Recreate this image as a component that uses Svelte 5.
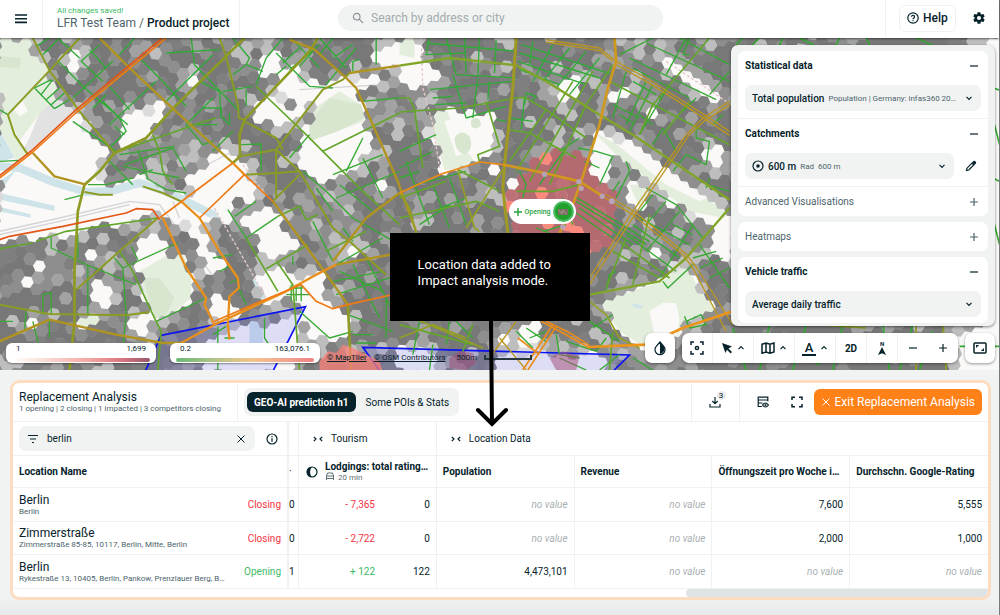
<script lang="ts">
  type Point = [number, number]

  let query = $state('berlin')
  let search = $state('')
  let tab = $state(0)

  const tabs = ['GEO-AI prediction h1', 'Some POIs & Stats']

  const rows = [
    { name: 'Berlin', address: 'Berlin', status: 'Closing', cut: '0', delta: '- 7,365', total: '0', values: ['', '', '7,600', '5,555'] },
    { name: 'Zimmerstraße', address: 'Zimmerstraße 85-85, 10117, Berlin, Mitte, Berlin', status: 'Closing', cut: '0', delta: '- 2,722', total: '0', values: ['', '', '2,000', '1,000'] },
    { name: 'Berlin', address: 'Rykestraße 13, 10405, Berlin, Pankow, Prenzlauer Berg, B…', status: 'Opening', cut: '1', delta: '+ 122', total: '122', values: ['4,473,101', '', '', ''] },
  ]

  const columns = ['Population', 'Revenue', 'Öffnungszeit pro Woche i…', 'Durchschn. Google-Rating']

  // the map has a west and an east sheet, the east one starts here
  const EAST = 1200

  const parse = (offset: number) => (v: string) =>
    v.split(' ').map((p) => {
      const [x, y] = p.split(',').map(Number)
      return [x + offset, y] as Point
    })

  // areas without residents, the hex layer leaves them out
  const voids = [
    ...[
      '0,0 95,0 110,50 140,100 160,160 200,200 235,225 255,275 300,320 335,350 300,375 290,400 300,430 340,440 400,420 460,430 530,470 560,480 580,440 540,420 600,385 660,345 700,340 740,385 760,420 780,470 760,500 720,480 690,500 680,550 640,540 615,560 605,590 640,640 680,690 640,720 650,760 700,800 720,840 660,870 640,820 620,780 640,750 625,690 600,640 570,570 520,540 460,530 400,535 350,560 250,580 150,600 70,600 0,610',
      '205,60 245,35 265,50 240,90 205,95',
      '370,240 430,215 480,240 460,280 400,310 360,320 350,280',
      '460,190 490,175 500,200 470,210',
      '560,140 600,105 605,130 560,170',
      '770,180 800,170 830,200 870,220 950,170 920,220 890,260 850,270 800,240 780,260 765,230',
      '780,60 830,50 850,100 790,120 760,110',
      '860,90 900,80 900,130 980,140 1130,110 1150,150 1070,165 1040,160 990,160 900,220 880,200 840,150',
      '920,260 960,180 1020,160 1085,200 1095,250 1110,330 1090,370 1040,390 980,430 940,420 900,380 890,320 930,300',
      '420,620 470,580 510,600 490,640 560,660 580,720 575,780 520,820 470,850 440,790 430,720 400,660',
      '290,720 340,740 350,790 300,810 280,770',
      '720,530 760,510 850,530 860,580 900,610 890,640 840,670 780,650 770,600 800,590 720,570',
      '750,690 800,700 850,700 880,720 940,700 1000,690 960,740 1000,800 1040,810 1040,900 990,910 930,900 900,820 860,790 800,800 780,760',
      '220,830 300,830 310,870 250,880',
      '380,850 450,840 470,890 400,880',
      '80,845 130,840 130,870 80,865',
      '1130,60 1150,20 1200,0 1250,0 1260,60 1280,90 1340,110 1330,140 1260,150 1200,140 1200,90 1140,90',
      '1000,590 1050,590 1050,620 980,570',
      '1130,420 1160,410 1170,440 1140,450',
      '690,870 890,840 900,900 880,1010 600,1010 600,930 660,880',
      '1020,640 1060,610 1070,650 1040,670',
      '50,715 85,715 85,740 50,740',
      '105,665 135,665 135,690 105,690',
      '255,640 290,640 290,665 255,665',
    ].map(parse(0)),
    ...[
      '85,220 150,205 180,240 240,220 285,240 300,320 260,345 190,390 130,395 120,350 100,310',
      '500,120 530,120 530,160 490,180 525,210 510,235 470,190 450,180',
      '580,280 650,300 740,350 850,440 960,490 990,520 1000,600 990,660 930,640 920,600 960,580 870,520 820,510 760,430 700,380 640,360 560,330',
      '565,385 600,340 640,380 620,430 580,400',
      '590,790 700,750 790,730 860,670 890,740 960,830 850,850 830,910 740,930 660,880 600,810',
      '690,440 750,430 760,470 720,510 690,490',
      '640,145 680,145 680,180 640,180',
      '750,200 790,200 780,230 750,230',
      '760,60 820,70 900,120 980,190 940,190 880,150 800,100',
      '910,320 960,330 960,400 920,370',
      '360,860 430,860 440,900 400,930 350,930',
      '280,890 330,900 310,940',
      '55,495 85,495 85,525 55,525',
      '290,950 600,950 640,1010 300,1010',
      '755,615 800,615 790,650 755,645',
      '240,380 290,390 285,420 240,400',
      '310,430 370,430 365,460 320,460',
      '0,930 120,940 120,1010 0,1010',
      '1750,0 1820,0 1820,1010 1750,1010',
      '1660,880 1820,880 1820,1010 1680,1010',
    ].map(parse(EAST)),
  ]

  const inside = (x: number, y: number, poly: Point[]) => {
    let hit = false
    for (let i = 0, j = poly.length - 1; i < poly.length; j = i++) {
      const [xi, yi] = poly[i]
      const [xj, yj] = poly[j]
      if (yi > y !== yj > y && x < ((xj - xi) * (y - yi)) / (yj - yi) + xi) hit = !hit
    }
    return hit
  }
  const isVoid = (x: number, y: number) => voids.some((v) => inside(x, y, v))

  let seed = 7
  const random = () => {
    seed = (seed * 16807) % 2147483647
    return seed / 2147483647
  }

  const tones = ['#747474', '#7b7b7b', '#8a8a8a', '#9f9f9f', '#bcbcbc', '#dadada', '#f0efef']
  const redTones = ['#b1656c', '#bb6c72', '#fa8679']

  const buildHexes = () => {
    const paths: Record<string, string> = {}
    const r = 20
    const turn = 0.12
    for (let row = -14; row < 48; row++) {
      for (let col = -6; col < 108; col++) {
        const gx = col * r * 1.5
        const gy = (row + (col % 2 ? 0.5 : 0)) * r * 1.732
        const x = gx * Math.cos(turn) - gy * Math.sin(turn)
        const y = gx * Math.sin(turn) + gy * Math.cos(turn) - 80
        const pick = random()
        if (x < -24 || x > 3024 || y < -24 || y > 1020 || isVoid(x, y)) continue
        const clump = Math.sin(x / 95 + y / 140) + Math.sin(y / 70 - x / 160)
        let edge = 0
        for (let a = 0; a < 6; a++) {
          if (isVoid(x + 30 * Math.cos(a), y + 30 * Math.sin(a))) edge++
        }
        let tone = pick < 0.66 ? 0 : pick < 0.78 ? 1 : pick < 0.89 ? 2 : pick < 0.96 ? 3 : 4
        if (edge > 0) tone = Math.min(6, Math.floor(pick * 4 + edge * 0.5))
        else if (clump > 1.2) tone = Math.min(5, 1 + Math.floor(pick * 4))
        let color = tones[tone]
        if (Math.hypot(x - 1690, y - 510) < 166) color = redTones[pick < 0.7 ? 0 : pick < 0.9 ? 1 : 2]
        let d = ''
        for (let a = 0; a < 6; a++) {
          const t = turn + (a * Math.PI) / 3
          d += `${a ? 'L' : 'M'}${(x + 20.6 * Math.cos(t)).toFixed(0)} ${(y + 20.6 * Math.sin(t)).toFixed(0)}`
        }
        paths[color] = (paths[color] ?? '') + d + 'Z'
      }
    }
    return Object.entries(paths)
  }
  const hexes = buildHexes()

  const west = [
    {
      color: '#2fab36', width: 4,
      d: 'M110 25 150 0M130 50 180 0M175 68 250 145 385 260M180 5 240 60M105 150 165 212M125 170 160 125M140 185 180 150M155 200 195 165M165 212 210 185M105 150 155 125M270 35 320 90M300 20 245 70 310 130M330 145 390 215M220 180 340 70M240 215 440 50M330 260 470 130M280 210 320 170M310 190 360 240 380 280 330 330M345 265 375 290M220 250 350 340M405 0 360 50M425 65 470 110 560 205M500 45 660 35M575 0 585 80M640 50 500 190M585 80 720 220M600 130 660 160 665 240M560 260 640 180M610 210H665V235L690 260V225M575 260H655M670 160 760 145M740 155V205M700 0 750 60 740 80 700 110M770 140 800 60 850 0M740 80 790 100M830 45 930 145 1000 150M850 75 900 30M830 110 860 85M870 95 960 20M880 5 960 90M900 85 940 40M1000 0 960 50M960 0 1040 90M1070 30 980 140M1060 100V70L1080 65M1130 0V80M1000 60 1060 20',
    },
    {
      color: '#35a932', width: 4,
      d: 'M360 350 525 325M375 380 520 330M415 335 430 380 445 420M330 370 400 440M420 410 460 395M520 330 560 400M560 260 610 320 640 310M370 385 540 420M700 280 640 340M440 420 500 455 560 465M265 440 320 440 400 420M725 320 785 318V400M910 400 980 460 1060 540 1200 620M930 290 870 360M1000 410 1150 350M1010 480 1200 400M1020 440 1120 520M1090 360 1150 480M950 450 1000 520M1040 400 1090 300M1085 190 1200 180M940 550 1000 670M1060 610 1030 570M1010 680 1150 600M1020 700 1150 760M1060 680 1140 840M1100 660 1180 820M1000 730 1150 700M1010 770 1200 710M195 485 245 472M0 850H40M100 850 120 930M0 370 60 367M0 215 25 230M655 865V996M795 840V900L830 950M675 900H705M640 890 680 865M900 820 990 900 1060 880M1060 890H1120M1070 915H1130M1045 830 1180 880M1160 770V900',
    },
    {
      color: '#38a833', width: 4,
      d: 'M155 598V630L260 680 410 740M235 590V660M265 680V830M345 660 370 690 380 830 370 930M370 690 535 615M395 625 415 665M470 850 620 780M130 830V770L155 765V830M80 820 75 880M150 845V900M685 515 740 600M740 600 835 535M705 535 770 490M640 660 700 650M660 700 690 685M690 735 715 725M715 745 740 800M875 740V790M890 740V790M905 740V790M860 770H930M870 750H910M880 655V680',
    },
    {
      color: '#63a62b', width: 5,
      d: 'M0 632 100 615M110 610 200 580 475 540M345 345 600 255 650 240M460 290 480 340 490 400 520 440M770 145 805 180 920 290 970 340 1090 460 1200 560M970 340 1200 225M740 600 835 760M835 535 900 505 920 545 955 530M800 692 925 620M835 675 880 740 900 996M360 640 400 700 460 830 485 880 475 996M980 640 1100 580',
    },
    {
      color: '#8b9c24', width: 6,
      d: 'M100 0 150 98 240 220 345 345M240 0 150 98 25 230 45 290 85 350M660 0 680 55 715 200 718 240 735 245M0 800 150 828 380 832 450 822M475 540 360 640 230 755M255 462 300 470H340M430 445 490 465 545 490M830 335 900 400 1000 570 1050 610 1160 710M1050 105 1030 125 970 155 830 335 722 355M735 250 830 300 850 335M830 335V400L830 480M740 410 830 405 900 400M820 490 900 410',
    },
    {
      color: '#8f9a22', width: 8,
      d: 'M735 0 520 212 440 300 345 345 300 400 255 440 235 520 225 700V850L210 996M955 0 930 40 735 245 720 290 722 355 700 375M1045 800 1055 996',
    },
    {
      color: '#b0941f', width: 7,
      d: 'M300 0 385 85 520 212 700 375M870 5 945 35 1040 120 1070 150 1115 250 1195 430 1220 500 1250 580M1050 105 1200 83M0 910 150 845 350 890 490 915H545M100 345 165 415 260 440M820 490 960 680 1045 800M1010 680 1200 645M1000 670 1100 540 1200 465',
    },
    {
      color: '#e8901c', width: 7,
      d: 'M490 540 560 690 620 780 615 800 645 860M600 540 660 640 715 720 718 750 690 775 685 860 690 905M545 490 600 540M545 915 645 860 860 760 950 710 1010 680M700 375 735 410',
    },
    {
      color: '#ef7a16', width: 5,
      d: 'M480 540 700 375M600 540 735 410 820 490M905 740 950 790 1000 812 1045 800 1200 765M645 850 760 800 905 740M0 420 100 342 232 222 500 0',
    },
    { color: '#e25718', width: 5, d: 'M0 413 100 335 230 215 488 0M0 605 30 595 190 565 380 525 410 512 460 515 480 545' },
  ]

  const east = [
    {
      color: '#2fab36', width: 4,
      d: 'M90 0 80 50 200 45M140 0 170 110 350 120M195 0 200 105M240 0 235 110M290 5 285 105M80 15 350 40M90 155 340 130M100 180 160 175M105 200 200 195M160 110 200 240M235 120 220 240M270 130 265 185M200 240 320 205M365 20 640 110M360 45 600 120M355 70 560 140M360 95 480 140M400 10 390 80M460 20 400 130M510 30 430 130M560 40 470 150M600 60 510 170M375 200 380 165 410 175 395 190M330 240 400 250M375 180 365 275M480 340 540 300M420 440 500 330M290 245 320 250M535 330 590 340 640 355 600 440M555 370 600 390',
    },
    {
      color: '#35a932', width: 4,
      d: 'M660 50 760 0M740 15 990 130M690 60 950 185M700 90 870 180M680 100 640 240M740 130 680 260M760 140 690 280M810 140 720 290M700 130 770 170M640 200 720 240M660 230 700 255M890 180 850 220M860 0 800 110M720 230 760 260M790 270 830 340M790 270 760 320M890 270V300L930 310 920 380 860 350 820 400M970 230 940 260M870 0 850 50 870 50M840 0 990 80M920 440 990 460M930 420 920 450M990 100 930 170M650 480 690 400 680 370M660 430 640 460M740 450 830 500 910 600M760 470 720 520M800 490 740 560M840 520 740 640M880 560 780 720M720 540 870 620M700 560 840 660M680 590 830 700M820 560 880 590M620 755 630 710 650 700M790 730 805 750 880 680M900 620 990 750M880 660 950 640M900 690 970 660M930 720 990 690',
    },
    {
      color: '#35a932', width: 4,
      d: 'M360 400 380 440 370 480M525 475 750 610M530 490 740 620M540 510 700 620M530 525 640 600M490 480 520 560M430 580 500 560M410 570 450 585M0 340 110 290M0 390 100 340M20 370 60 480M30 400 90 560M50 440 200 400M100 440 150 570M150 420 200 560M60 560 150 500M120 510 200 480M0 420 60 400M580 870 640 830M570 850 660 910M500 910 590 940 620 900M470 890 480 950 540 960M855 835 870 870 920 860 905 830 860 850M380 870 440 910M390 900 440 880M350 880 400 930M60 850 40 950M150 850 140 920M170 850 220 900M100 920 90 996M480 960 560 996M700 960 760 996M660 950 600 996',
    },
    {
      color: '#35a932', width: 5,
      d: 'M1010 20 1030 0M1080 0 1050 30M1150 0 1130 40M1200 0 1260 30M1320 0 1300 40M1400 0 1420 40M1550 0 1640 40M1000 870 1040 996M1110 860 1080 996M1150 900 1000 960M1220 860 1180 996M1330 860 1300 996M1400 900 1250 980M1450 860 1470 996M1540 860 1500 996M1600 880 1560 996M1780 150 1800 156M1785 260 1800 320M1780 420 1800 430M1785 560 1800 620M1680 925 1800 925M1780 700V800',
    },
    {
      color: '#63a62b', width: 5,
      d: 'M0 222 180 210 350 180 375 178 440 215 560 300M0 180 30 180 45 215 70 390M325 275 390 285 530 360M440 215 330 370M520 130 350 400M580 100 390 430M640 80 560 200 450 440M240 372 235 350 300 325 260 190M350 460 460 460 540 440M0 540 230 490 300 520M0 480 140 430M175 395 300 460M630 130 990 320M930 0 760 200 720 290M870 190 790 290M0 860 220 920M220 860 190 940M640 880 630 996M660 610 810 720M640 640 780 720M750 530 700 740M680 600 620 750',
    },
    {
      color: '#80a528', width: 7,
      d: 'M0 83 150 60 350 82 440 130 600 230 700 290 990 485M570 770 780 730 860 660 990 510',
    },
    {
      color: '#93a022', width: 5,
      d: 'M0 465 30 510 50 585M310 395 200 570M175 395 190 450 225 570 240 580M570 790 620 830 660 900 720 930M0 900 100 860 200 900M20 830 250 930M1550 850V996M1630 850 1640 996M1250 860 1400 870',
    },
    { color: '#a09a22', width: 9, d: 'M350 0 340 150 315 380 310 450 325 585' },
    {
      color: '#bb9620', width: 4,
      d: 'M440 5 600 30 650 70M440 12 600 38 640 70M650 70 740 120 860 195 990 280M645 78 740 130 860 205 990 292M990 190 910 240 860 290 700 520 570 720M992 200 917 247 868 292 708 527 570 740M610 475 700 530 850 650 880 690 980 880M618 468 706 522 860 648 892 690 1000 860M270 960 350 850M300 900 380 996',
    },
    { color: '#d0991d', width: 8, d: 'M645 0 650 70 625 150 600 260 545 430 520 500 480 585M310 380 435 405 540 430 610 475' },
    { color: '#ec8c18', width: 5, d: 'M0 465 120 410 240 372 310 380M425 850 500 890 570 930M440 850 510 884 570 922M460 860 370 996M470 866 385 996M355 900 420 950' },
    { color: '#ec951c', width: 8, d: 'M565 927 740 920 850 870 1000 820' },
  ]
</script>

{#snippet chevron(up = false)}
  <svg class="chevron" class:up viewBox="0 0 8 8" aria-hidden="true"><path d="M1.5 2.8 4 5.3 6.5 2.8" /></svg>
{/snippet}

{#snippet sign(plus = false)}
  <svg class="sign" viewBox="0 0 12 12" aria-hidden="true"><path d={plus ? 'M2 6h8M6 2v8' : 'M2 6h8'} /></svg>
{/snippet}

{#snippet streets(sheet: typeof west)}
  {#each sheet as road}
    <path d={road.d} fill="none" stroke={road.color} stroke-width={road.width} stroke-linejoin="round" />
  {/each}
{/snippet}

<div class="app">
  <header>
    <button class="burger" aria-label="Menu">
      <svg width="14" height="12" viewBox="0 0 14 12"><path d="M1 2h12M1 5.7h12M1 9.4h12" /></svg>
    </button>
    <div class="project">
      <span class="saved">All changes saved!</span>
      <h1><a href="#team">LFR Test Team</a> / <b>Product project</b></h1>
    </div>
    <label class="search">
      <svg width="12" height="12" viewBox="0 0 12 12"><circle cx="4.7" cy="4.7" r="3.3" /><path d="m7.2 7.2 3.8 3.8" /></svg>
      <input type="text" aria-label="Search" placeholder="Search by address or city" bind:value={search} />
    </label>
    <div class="actions">
      <button class="help">
        <svg width="12" height="12" viewBox="0 0 12 12"><circle cx="6" cy="6" r="5.2" /><path d="M4.5 4.8a1.5 1.5 0 1 1 2.2 1.3c-.5.3-.7.5-.7 1.1M6 8.3v1" /></svg>
        Help
      </button>
      <button class="gear" aria-label="Settings">
        <svg width="14" height="14" viewBox="0 0 24 24"><path d="M19.400 13c0-.3.1-.6.1-1s0-.7-.1-1l2.100-1.600c.2-.2.2-.4.1-.6l-2-3.500c-.1-.2-.4-.3-.6-.2l-2.500 1c-.5-.4-1.100-.7-1.700-1l-.4-2.600c0-.3-.2-.5-.5-.5h-4c-.3 0-.5.2-.5.4L9 5.100c-.6.2-1.100.6-1.600 1l-2.500-1c-.2-.1-.5 0-.6.2l-2 3.500c-.1.2-.1.4.1.6L4.600 11c0 .3-.1.6-.1 1s0 .7.1 1l-2.200 1.600c-.2.2-.2.4-.1.6l2 3.500c.1.2.4.3.6.2l2.500-1c.5.4 1 .7 1.600 1l.4 2.600c.1.3.3.5.6.5h4c.3 0 .5-.2.5-.4l.4-2.700c.6-.2 1.100-.6 1.600-1l2.500 1c.2.1.5 0 .6-.2l2-3.500c.1-.2.1-.4-.1-.6zM12 15.500a3.500 3.500 0 1 1 0-7 3.500 3.500 0 0 1 0 7z" /></svg>
      </button>
    </div>
  </header>

  <section class="map" aria-label="Map">
    <svg class="canvas" viewBox="0 0 3000 996" preserveAspectRatio="xMidYMid slice" aria-hidden="true">
      <rect width="3000" height="996" fill="#fbf9f8" />
      <path fill="#e2e2e3" d="M45 380 100 335 235 215 170 160 130 200 90 300zM330 70 420 0h80L385 90z" />
      <path fill="#e4eedd" d="M0 0H100L150 98 25 230 45 290 85 350 50 370 0 270zM25 230 150 98l30 70-60 60-60 80zM930 220l90-60 65 40 10 50-165 60zM420 700l120-70 35 70v80l-85 70-50-60zM220 830h85v40h-60zM980 570h70v50z" />
      <path fill="#d9e6cf" d="M0 55 65 60 60 92 0 86zM930 250l60-70 95 20 10 40-80 40-85 30zM430 720l50 0 45 60-30 60-30 0z" />
      <path fill="#fbf9f8" d="m40 210 30-20 15 30-25 15z" />
      <path fill="none" stroke="#cfe4e9" stroke-width="24" d="M0 385 60 390 160 432 260 462 340 458 420 435 500 460 560 490 640 530" />
      <path fill="none" stroke="#cfe4e9" stroke-width="14" d="M640 520 700 620 790 780 770 900" />
      <path fill="#cfe4e9" d="M0 465l165 38v16L0 485zM0 507l93 22v10L0 520zM0 275l45 85-45 10zM0 430 50 395 10 450zM750 850h40v90h-40z" />
      <path fill="none" stroke="#d4d4d6" stroke-width="4" d="M0 580 180 540 390 490 480 500 660 740M0 590 180 550 390 500M520 490 540 540M900 155 1150 140M490 450 690 345" />
      <g transform="translate({EAST} 0)">
        <path fill="#e4eedd" d="M0 0h45v60L0 50zM85 220l50-15 50 110 50 70-100 12zM580 280l240 130 170 120-20 10-100-20-200-150zM600 790l190-60 70-60 30 70 70 90-110 20-20 60-90 20-80-50zM690 440h60l10 30-40 40zM1440 0h260v30h-260z" />
        <path fill="#fbf9f8" d="m135 250 50-15 45 100-60 20zM750 820l40-25h40l10 50-10 50-60 20zM640 310l100 40 120 90 60 40-20 10-100-50z" />
        <path fill="#d9e6cf" d="M165 300q20-30 45-5 15 40-15 55-30-10-30-50M215 245q25-15 30 15-15 20-30 5z" />
        <path fill="#cfe4e9" d="m700 795 30 8-6 10-26-8zM1300 0h110v16h-110z" />
      </g>
      {#each hexes as [color, d]}
        <path {d} fill={color} opacity="0.97" />
      {/each}
      <path class="rail" d="M645 510 800 780M1265 0 1270 150 1300 260 1320 390M2000 70 2180 190M730 380 790 460" />
      <path class="zone" d="M485 892 918 806 800 1040H420zM1090 928 1890 951 1800 1040H1170z" />
      {@render streets(west)}
      <g transform="translate({EAST} 0)">{@render streets(east)}</g>
      <g fill="#b9a3b8">
        <circle cx="1635" cy="409" r="8" /><circle cx="1738" cy="431" r="8" /><circle cx="1745" cy="451" r="8" />
        <circle cx="1808" cy="475" r="8" /><circle cx="1837" cy="490" r="9" /><circle cx="1690" cy="567" r="8" />
      </g>
      <path fill="#fb8079" opacity=".75" d="M960 970 985 940 1010 945 1030 920 1060 930 1080 940 1140 970 1150 1000H960z" />
      <path fill="#a0486f" opacity=".5" d="M1350 960 1380 940 1420 945 1430 975 1400 996 1350 990zM1650 960l40-20 50 15-10 41h-60z" />
    </svg>

    <div class="marker">
      <svg width="8" height="8" viewBox="0 0 8 8"><path d="M0 4h8M4 0v8" /></svg>
      Opening
      <i><svg width="10" height="6" viewBox="0 0 10 6"><path fill="#7d6f63" d="M0 0h10v6H0z" /><path stroke="#a3988b" fill="none" d="m1 1 3 4 1-4 3 4" /></svg></i>
    </div>

    <aside class="layers">
      <div class="box">
        <section>
          <button class="fold open">Statistical data {@render sign()}</button>
          <div class="field">
            <label for="stat">Total population</label>
            <select id="stat"><option>Population | Germany: infas360 20…</option></select>
            {@render chevron()}
          </div>
        </section>
        <section>
          <button class="fold open">Catchments {@render sign()}</button>
          <div class="pair">
            <div class="field">
              <svg width="12" height="12" viewBox="0 0 12 12"><circle class="line" cx="6" cy="6" r="5" /><circle cx="6" cy="6" r="1.8" fill="#06232b" /></svg>
              <label for="catch">600 m</label>
              <select id="catch"><option>Rad&nbsp; 600 m</option></select>
              {@render chevron()}
            </div>
            <button class="edit" aria-label="Edit catchment">
              <svg width="12" height="12" viewBox="0 0 12 12"><path class="line" d="M1.500 10.500 2 8.200l5-5 1.800 1.800-5 5z" /><path fill="#06232b" d="m7 2.500 1.500-1.500q.8-.6 1.600.1l.8.8q.6.8 0 1.600L9.500 5z" /></svg>
            </button>
          </div>
        </section>
        <section>
          <button class="fold">Advanced Visualisations {@render sign(true)}</button>
        </section>
      </div>
      <div class="box"><button class="fold">Heatmaps {@render sign(true)}</button></div>
      <div class="box last">
        <button class="fold open">Vehicle traffic {@render sign()}</button>
        <div class="field">
          <select class="main" aria-label="Vehicle traffic"><option>Average daily traffic</option></select>
          {@render chevron()}
        </div>
      </div>
    </aside>

    <div class="legends">
      <div class="legend"><span>1</span><span>1,699</span><i class="population"></i></div>
      <div class="legend"><span>0.2</span><span>163,076.1</span><i class="traffic"></i></div>
      <p class="credits">
        <a href="#maptiler">© MapTiler</a>
        <a href="#osm">© OSM Contributors</a>
        <span>500m</span>
        <i></i>
      </p>
    </div>

    <div class="tools">
      <button class="tool" aria-label="Contrast">
        <svg width="14" height="16" viewBox="0 0 14 16"><path class="line" d="M7 2 3.400 6.200a5 5 0 1 0 7.200 0z" /><path fill="#06232b" d="M7 2v12a5 5 0 0 0 3.600-7.800z" /></svg>
      </button>
      <div class="bar">
        <button aria-label="Focus">
          <svg width="14" height="14" viewBox="0 0 14 14"><path class="line bold" d="M1 4V1h3M10 1h3v3M13 10v3h-3M4 13H1v-3" /><circle class="line bold" cx="7" cy="7" r="1.600" /></svg>
        </button>
        <button class="wide" aria-label="Select">
          <svg width="12" height="12" viewBox="0 0 12 12"><path fill="#06232b" d="m1 1 10 3.600-3.600 1.800 3.600 3.600-1.400 1.400L6 7.800 4.400 11z" /></svg>
          {@render chevron(true)}
        </button>
        <button class="wide" aria-label="Map style">
          <svg width="14" height="12" viewBox="0 0 14 12"><path class="line bold" d="M1 2.200 5 1l4 1.200L13 1v9l-4 1.200L5 10l-4 1.200zM5 1v9M9 2v9" /></svg>
          {@render chevron(true)}
        </button>
        <button class="wide" aria-label="Labels"><span class="letter">A</span>{@render chevron(true)}</button>
        <button class="text">2D</button>
        <button class="north" aria-label="North"><span>N</span><svg width="8" height="8" viewBox="0 0 8 8"><path fill="#06232b" d="m4 0 4 8-4-1.800L0 8z" /></svg></button>
        <button class="zoom" aria-label="Zoom out">{@render sign()}</button>
        <button class="zoom" aria-label="Zoom in">{@render sign(true)}</button>
      </div>
      <button class="tool" aria-label="Fit screen">
        <svg width="14" height="12" viewBox="0 0 14 12"><rect class="line bold" x="1" y="1" width="12" height="10" rx="1" /><path class="line" d="M3.600 5.400V3.600h2M10.400 6.600v1.800h-2" /></svg>
      </button>
    </div>

    <div class="callout">
      <p>Location data added to<br />Impact analysis mode.</p>
      <svg width="34" height="106" viewBox="0 0 34 106"><path d="M16 0 17 102M3 89l14 14 14-14" /></svg>
    </div>
  </section>

  <main>
    <div class="card">
      <div class="top">
        <div class="title">
          <h2>Replacement Analysis</h2>
          <p>1 opening | 2 closing | 1 impacted | 3 competitors closing</p>
        </div>
        <div class="tabs">
          {#each tabs as label, i}
            <button class:active={tab === i} onclick={() => (tab = i)}>{label}</button>
          {/each}
        </div>
        <button class="download" aria-label="Downloads">
          <svg width="12" height="12" viewBox="0 0 12 12"><path class="line" d="M6 1v6.500M3.300 5 6 7.700 8.700 5M1 8v3h10V8" /></svg>
          <span class="badge">3</span>
        </button>
        <div class="right">
          <button class="icon" aria-label="Columns">
            <svg width="12" height="12" viewBox="0 0 12 12"><path class="line" d="M5 10.500H1.200V1.200h9.600v4M1 4h10M1.500 7h4" /><path class="line" d="M5.500 9q3-4 6 0-3 4-6 0z" /><circle cx="8.500" cy="9" r="1" fill="#06232b" /></svg>
          </button>
          <button class="icon" aria-label="Fullscreen">
            <svg width="12" height="12" viewBox="0 0 12 12"><path class="line bold" d="M1 4V1.200h3M8 1.200h3V4M11 8v2.800H8M4 10.800H1V8" /></svg>
          </button>
          <button class="exit">
            <svg width="8" height="8" viewBox="0 0 8 8"><path d="m.5.5 7 7M7.500.5l-7 7" /></svg>
            Exit Replacement Analysis
          </button>
        </div>
      </div>

      <table>
        <colgroup><col class="place" /><col class="sliver" /><col /><col /><col /><col /><col /></colgroup>
        <thead>
          <tr class="groups">
            <td class="pinned">
              <div class="finder">
                <div class="filter">
                  <svg width="12" height="10" viewBox="0 0 12 10"><path class="line" d="M1 1.500h10M3 5h6M5 8.500h2" /></svg>
                  <input type="text" aria-label="Filter locations" bind:value={query} />
                  <button aria-label="Clear" onclick={() => (query = '')}><svg width="8" height="8" viewBox="0 0 8 8"><path stroke="#06232b" d="m.5.500 7 7M7.500.5l-7 7" /></svg></button>
                </div>
                <button aria-label="Info"><svg width="12" height="12" viewBox="0 0 12 12"><circle class="line" cx="6" cy="6" r="5" /><path class="line" d="M6 5.200v3.600M6 3v1.200" /></svg></button>
              </div>
            </td>
            <td></td>
            <th class="group">
              <svg width="10" height="6" viewBox="0 0 10 6"><path class="line" d="m.8.800 2.200 2.200L.8 5.200M9.200.8 7 3l2.200 2.200" /></svg>Tourism
            </th>
            <th class="group" colspan="4">
              <svg width="10" height="6" viewBox="0 0 10 6"><path class="line" d="m.8.800 2.200 2.200L.8 5.200M9.200.8 7 3l2.200 2.200" /></svg>Location Data
            </th>
          </tr>
          <tr class="heads">
            <th class="pinned">Location Name</th>
            <td class="cut">·</td>
            <th>
              <div class="metric">
                <svg width="12" height="12" viewBox="0 0 12 12"><circle class="line" cx="6" cy="6" r="5" /><path fill="#06232b" d="M6 1a5 5 0 0 0 0 10q-2-2-2-5t2-5" /></svg>
                <div>
                  Lodgings: total rating…
                  <small><svg width="10" height="8" viewBox="0 0 10 8"><path fill="none" stroke="#5d7076" d="M1.500 8V4l1-3h5l1 3v4M1.500 4h7M1.500 6.500h7" /></svg>20 min</small>
                </div>
              </div>
            </th>
            {#each columns as column}
              <th>{column}</th>
            {/each}
          </tr>
        </thead>
        <tbody>
          {#each rows as row}
            <tr>
              <td class="pinned">
                <div class="location">
                  <div>
                    <strong>{row.name}</strong>
                    <small>{row.address}</small>
                  </div>
                  <span class={row.status === 'Closing' ? 'loss' : 'gain'}>{row.status}</span>
                </div>
              </td>
              <td class="cut">{row.cut}</td>
              <td>
                <div class="change">
                  <span class={row.status === 'Closing' ? 'loss' : 'gain'}>{row.delta}</span>
                  <span>{row.total}</span>
                </div>
              </td>
              {#each row.values as value}
                <td class="value">
                  {#if value}{value}{:else}<em>no value</em>{/if}
                </td>
              {/each}
            </tr>
          {/each}
        </tbody>
      </table>
      <div class="track"><i></i></div>
    </div>
  </main>
</div>

<style>
  :global(body) {
    background: #f1f3f3;
    font-family: Roboto, 'Liberation Sans', sans-serif;
    font-size: 10px;
    color: #06232b;
  }

  .app {
    display: flex;
    flex-direction: column;
    min-height: 100vh;
    box-sizing: border-box;
    border-right: 1px solid #777b7d;
    --line: #f0f2f2;
    --soft: #f1f3f3;
    --ink: #06232b;
    --muted: #4d646c;
  }

  button,
  input,
  select {
    font: inherit;
    color: inherit;
    border: 0;
    padding: 0;
    margin: 0;
    background: none;
    min-width: 0;
  }

  button {
    cursor: pointer;
  }

  svg {
    flex: none;
  }

  h1,
  h2,
  p {
    margin: 0;
    font-weight: 400;
  }

  .line {
    fill: none;
    stroke: var(--ink);
    stroke-width: 1.2;
  }

  .line.bold {
    stroke-width: 1.5;
  }

  header {
    display: grid;
    grid-template-columns: 43px 197px minmax(0, 1fr) 114px;
    height: 38px;
    position: relative;
    z-index: 2;
    background: #fff;
    box-shadow: 0 1px 2px rgba(0, 0, 0, 0.5);
  }

  .burger {
    display: flex;
    align-items: center;
    justify-content: center;
    border-right: 1px solid var(--line);
  }

  .burger svg {
    stroke: var(--ink);
    stroke-width: 1.6;
  }

  .project {
    padding: 6px 0 0 14px;
    border-right: 1px solid var(--line);
    white-space: nowrap;
  }

  .saved {
    display: block;
    font-size: 8px;
    line-height: 10px;
    color: #3dba62;
  }

  h1 {
    font-size: 12px;
    line-height: 14px;
    color: var(--muted);
  }

  h1 a {
    color: inherit;
    text-decoration: none;
  }

  h1 b {
    font-weight: 500;
    color: var(--ink);
  }

  .search {
    display: flex;
    align-items: center;
    gap: 7px;
    width: 293px;
    height: 26px;
    margin: 5px 0 0 98px;
    padding: 0 18px 0 14px;
    border-radius: 13px;
    background: var(--soft);
  }

  .search svg {
    fill: none;
    stroke: #8d9799;
    stroke-width: 1.2;
  }

  .search input {
    flex: 1;
    font-size: 12px;
    outline: 0;
  }

  .search input::placeholder {
    color: #a3abad;
  }

  .actions {
    display: flex;
    align-items: center;
    gap: 16px;
    padding: 0 0 2px 13px;
    border-left: 1px solid var(--line);
  }

  .help {
    display: flex;
    align-items: center;
    gap: 4px;
    height: 27px;
    padding: 0 7px;
    border: 1px solid var(--line);
    border-radius: 6px;
    font-size: 12px;
    font-weight: 500;
  }

  .help svg {
    fill: none;
    stroke: var(--ink);
    stroke-width: 1.2;
  }

  .gear svg {
    display: block;
    fill: var(--ink);
  }

  .map {
    flex: 1 0 332px;
    position: relative;
  }

  .canvas {
    position: absolute;
    width: 100%;
    height: 100%;
  }

  .rail {
    fill: none;
    stroke: #e3c9c9;
    stroke-width: 4;
    stroke-dasharray: 9 6;
  }

  .zone {
    fill: rgba(110, 110, 240, 0.2);
    stroke: #0a14f0;
    stroke-width: 5;
  }

  .marker {
    position: absolute;
    left: 51%;
    top: 161px;
    display: flex;
    align-items: center;
    gap: 2px;
    height: 25px;
    padding: 0 2px 0 5px;
    border-radius: 13px;
    background: #fff;
    color: #27a13c;
    font-size: 7px;
    font-weight: 500;
  }

  .marker > svg {
    stroke: #27a13c;
    stroke-width: 1.4;
  }

  .marker i {
    display: grid;
    place-items: center;
    width: 17px;
    height: 17px;
    border: 2px solid #4dbb62;
    border-radius: 50%;
    background: #20a12c;
  }

  .layers {
    position: absolute;
    top: 7px;
    right: 4px;
    width: 264px;
    box-sizing: border-box;
    padding: 6px 7px 3px;
    border-radius: 7px;
    background: var(--soft);
    box-shadow: 0 1px 3px rgba(0, 0, 0, 0.5);
  }

  .box {
    margin-bottom: 6px;
    border-radius: 7px;
    background: #fff;
  }

  .box.last {
    margin: 0;
    padding-bottom: 6px;
  }

  .box section + section {
    border-top: 1px solid var(--line);
  }

  .box section:not(:last-child) {
    padding-bottom: 7px;
  }

  .fold {
    display: flex;
    align-items: center;
    justify-content: space-between;
    width: 100%;
    height: 29px;
    padding: 0 8px 0 7px;
    color: var(--muted);
  }

  .fold.open {
    height: 34px;
    padding-bottom: 5px;
    font-weight: 700;
    color: var(--ink);
  }

  .sign {
    width: 12px;
    height: 12px;
    stroke: currentColor;
    stroke-width: 1.2;
  }

  .chevron {
    width: 8px;
    height: 8px;
    fill: none;
    stroke: var(--ink);
    stroke-width: 1.2;
    pointer-events: none;
  }

  .chevron.up {
    transform: rotate(180deg);
  }

  .field {
    display: flex;
    align-items: center;
    gap: 4px;
    flex: 1;
    height: 26px;
    margin: 0 7px;
    padding: 0 8px 0 7px;
    border-radius: 7px;
    background: var(--soft);
  }

  .field label,
  .field .main {
    font-size: 10px;
    font-weight: 500;
  }

  .field select {
    flex: 1;
    appearance: none;
    font-size: 8px;
    color: var(--muted);
  }

  .field .main {
    font-size: 10px;
    color: var(--ink);
  }

  .pair {
    display: flex;
    align-items: center;
  }

  .pair .field {
    margin-right: 4px;
  }

  .edit {
    display: grid;
    place-items: center;
    width: 26px;
    margin-right: 4px;
  }

  .legends {
    position: absolute;
    left: 6px;
    bottom: 7px;
    display: flex;
    gap: 14px;
  }

  .legend {
    display: flex;
    flex-wrap: wrap;
    justify-content: space-between;
    width: 150px;
    height: 20px;
    box-sizing: border-box;
    padding: 0 6px;
    border-radius: 6px;
    background: #fff;
    box-shadow: 0 1px 2px rgba(0, 0, 0, 0.4);
    font-size: 8px;
    line-height: 12px;
  }

  .legend span {
    padding: 0 4px;
  }

  .legend i {
    width: 100%;
    height: 4px;
    margin-top: 2px;
    border-radius: 2px;
  }

  .population {
    background: linear-gradient(90deg, #fff, #fbe3da 20%, #f4a8a4 55%, #d8747e 80%, #95596b);
  }

  .traffic {
    background: linear-gradient(90deg, #6bb977, #b6c38a 30%, #f3c48b 55%, #f2a491 80%, #ee8485);
  }

  .credits {
    display: flex;
    align-items: center;
    gap: 7px;
    margin-left: -7px;
    padding-top: 9px;
    font-size: 8px;
  }

  .credits a {
    color: inherit;
  }

  .credits span {
    margin-left: 4px;
  }

  .credits i {
    width: 44px;
    height: 3px;
    border: 2px solid #26383d;
    border-top: 0;
  }

  .tools {
    position: absolute;
    right: 4px;
    bottom: 7px;
    display: flex;
    gap: 7px;
  }

  .tool,
  .bar {
    display: flex;
    height: 30px;
    border-radius: 7px;
    background: #fff;
    box-shadow: 0 1px 3px rgba(0, 0, 0, 0.4);
  }

  .tool {
    width: 30px;
    align-items: center;
    justify-content: center;
  }

  .bar button {
    display: flex;
    align-items: center;
    justify-content: center;
    gap: 4px;
    width: 31px;
    box-sizing: border-box;
    border-right: 1px solid var(--line);
  }

  .bar .wide {
    width: 41px;
  }

  .bar .text {
    font-weight: 700;
  }

  .bar .zoom {
    width: 30px;
    border: 0;
  }

  .bar .north {
    flex-direction: column;
    gap: 0;
    font-size: 6px;
    line-height: 6px;
    font-weight: 700;
  }

  .letter {
    width: 14px;
    border-bottom: 2px solid var(--ink);
    font-size: 13px;
    line-height: 13px;
    font-weight: 500;
  }

  .callout {
    position: absolute;
    z-index: 3;
    left: 39%;
    top: 195px;
    width: 200px;
    pointer-events: none;
  }

  .callout p {
    padding: 24px 28px 32px;
    background: #000;
    color: #fff;
    font-size: 13px;
    line-height: 16px;
    white-space: nowrap;
  }

  .callout svg {
    display: block;
    margin-left: 85px;
    fill: none;
    stroke: #000;
    stroke-width: 4;
    stroke-linecap: round;
  }

  main {
    padding: 10px 8px 15px 10px;
    background: linear-gradient(#f1f3f3 93%, #e6e9e9);
  }

  .card {
    border: 3px solid #fddcbf;
    border-radius: 9px;
    background: #fff;
    overflow: hidden;
  }

  .top {
    display: flex;
    height: 38px;
    border-bottom: 1px solid var(--line);
  }

  .title {
    width: 225px;
    box-sizing: border-box;
    padding: 7px 0 0 6px;
    border-right: 1px solid var(--line);
    white-space: nowrap;
  }

  h2 {
    font-size: 12px;
    line-height: 14px;
  }

  .title p {
    font-size: 8px;
    line-height: 10px;
    color: var(--muted);
  }

  .tabs {
    display: flex;
    gap: 3px;
    margin: 5px auto 5px 6px;
    padding: 4px 3px;
    border-radius: 7px;
    background: var(--soft);
  }

  .tabs button {
    padding: 0 7px;
    border-radius: 6px;
    white-space: nowrap;
  }

  .tabs .active {
    background: var(--ink);
    color: #fff;
    font-weight: 700;
  }

  .download {
    position: relative;
    display: grid;
    place-items: center;
    width: 49px;
    border-left: 1px solid var(--line);
    border-right: 1px solid var(--line);
  }

  .badge {
    position: absolute;
    top: 8px;
    right: 13px;
    width: 9px;
    border-radius: 5px;
    background: #e8ebeb;
    font-size: 8px;
    line-height: 9px;
  }

  .right {
    display: flex;
    align-items: center;
    padding: 0 6px;
  }

  .icon {
    display: grid;
    place-items: center;
    width: 34px;
    height: 26px;
  }

  .exit {
    display: flex;
    align-items: center;
    gap: 5px;
    height: 26px;
    padding: 0 7px 0 8px;
    border-radius: 6px;
    background: #ff8118;
    color: #fff;
    font-size: 12px;
    white-space: nowrap;
  }

  .exit svg {
    stroke: #fff;
  }

  table {
    width: 100%;
    table-layout: fixed;
    border-collapse: separate;
    border-spacing: 0;
  }

  .place {
    width: 276px;
  }

  .sliver {
    width: 10px;
  }

  th,
  td {
    box-sizing: border-box;
    height: 34px;
    padding: 0 6px;
    border-right: 1px solid var(--line);
    border-bottom: 1px solid var(--line);
    text-align: left;
    white-space: nowrap;
    overflow: hidden;
  }

  th:last-child,
  td:last-child {
    border-right: 0;
  }

  tbody tr:nth-child(2) td {
    height: 33px;
  }

  .heads th,
  .heads td {
    height: 32px;
  }

  .pinned {
    border-right-width: 2px;
  }

  .cut {
    padding: 0;
  }

  .finder,
  .filter {
    display: flex;
    align-items: center;
  }

  .finder {
    gap: 11px;
  }

  .finder svg {
    display: block;
  }

  .filter {
    gap: 8px;
    width: 220px;
    height: 25px;
    padding: 0 8px;
    border-radius: 7px;
    background: var(--soft);
  }

  .filter input {
    flex: 1;
    outline: 0;
  }

  .filter button {
    padding: 2px;
  }

  .group {
    padding-left: 14px;
    font-weight: 400;
  }

  .group svg {
    margin-right: 8px;
  }

  .metric {
    display: flex;
    align-items: center;
    gap: 7px;
    line-height: 11px;
  }

  .metric small {
    display: flex;
    gap: 3px;
    font-size: 8px;
    font-weight: 400;
    color: #5d7076;
  }

  .metric > svg {
    margin-left: 1px;
  }

  .location {
    display: flex;
    align-items: center;
    justify-content: space-between;
  }

  .location strong,
  .location small {
    display: block;
  }

  .location strong {
    font-size: 12px;
    line-height: 14px;
    font-weight: 400;
  }

  .location small {
    font-size: 8px;
    line-height: 10px;
    color: var(--muted);
  }

  .loss {
    color: #f5333f;
  }

  .gain {
    color: #3dba62;
  }

  .change {
    display: grid;
    grid-template-columns: 70px 1fr;
    text-align: right;
  }

  .value {
    text-align: right;
  }

  em {
    color: #a8afb1;
  }

  .track {
    height: 8px;
  }

  .track i {
    display: block;
    width: 31%;
    height: 8px;
    margin-left: auto;
    border-radius: 4px 0 0 4px;
    background: #dfe3e4;
  }
</style>
